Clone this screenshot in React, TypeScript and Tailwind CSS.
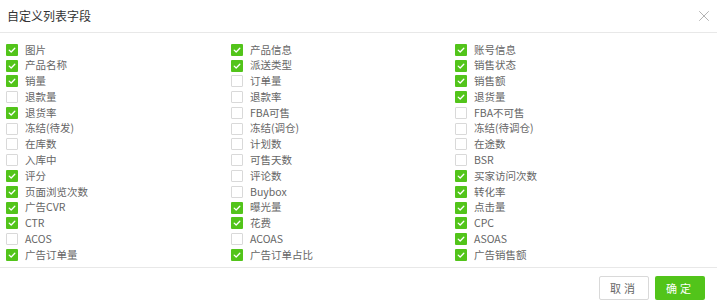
import { X } from "lucide-react";

const FIELDS: [string, boolean][] = [
  ["图片", true], ["产品信息", true], ["账号信息", true],
  ["产品名称", true], ["派送类型", true], ["销售状态", true],
  ["销量", true], ["订单量", false], ["销售额", true],
  ["退款量", false], ["退款率", false], ["退货量", true],
  ["退货率", true], ["FBA可售", false], ["FBA不可售", false],
  ["冻结(待发)", false], ["冻结(调仓)", false], ["冻结(待调仓)", false],
  ["在库数", false], ["计划数", false], ["在途数", false],
  ["入库中", false], ["可售天数", false], ["BSR", false],
  ["评分", true], ["评论数", false], ["买家访问次数", true],
  ["页面浏览次数", true], ["Buybox", false], ["转化率", true],
  ["广告CVR", true], ["曝光量", true], ["点击量", true],
  ["CTR", true], ["花费", true], ["CPC", true],
  ["ACOS", false], ["ACOAS", false], ["ASOAS", true],
  ["广告订单量", true], ["广告订单占比", true], ["广告销售额", true],
];

function Check({ checked }: { checked: boolean }) {
  if (!checked) {
    return <span className="block size-[12px] shrink-0 rounded-[1px] border border-[#d9d9d9] bg-white" />;
  }
  return (
    <span className="flex size-[12px] shrink-0 items-center justify-center rounded-[1px] bg-[#52c41a]">
      <svg viewBox="0 0 12 12" className="size-[12px]" fill="none">
        <path d="M3.2 6.1 5.2 8 8.8 4.3" stroke="white" strokeWidth="1.3" strokeLinecap="round" strokeLinejoin="round" />
      </svg>
    </span>
  );
}

export default function App() {
  return (
    <div className="flex h-[308px] w-[717px] flex-col bg-white font-['Noto_Sans_CJK_SC','Noto_Sans',sans-serif]">
      <header className="flex h-[33px] items-center justify-between border-b border-[#e8e8e8] pl-[7px] pr-[4px]">
        <h1 className="text-[12px] text-[#333]">自定义列表字段</h1>
        <X className="size-[18px] text-[#999]" strokeWidth={1} />
      </header>

      <div className="grid flex-1 grid-cols-[225px_224px_1fr] content-start auto-rows-[15.77px] pl-[6px] pt-[9px]">
        {FIELDS.map(([label, checked]) => (
          <label key={label} className="flex items-center gap-[7px]">
            <Check checked={checked} />
            <span className="text-[10.5px] leading-none text-[#666]">{label}</span>
          </label>
        ))}
      </div>

      <footer className="flex h-[41px] items-center justify-end gap-[6px] border-t border-[#e8e8e8] pr-[12px]">
        <button className="h-[24px] w-[50px] rounded-[2px] border border-[#d9d9d9] bg-white text-[11px] tracking-[3px] text-[#666]">
          取消
        </button>
        <button className="h-[24px] w-[50px] rounded-[2px] bg-[#52c41a] text-[11px] tracking-[3px] text-white">
          确定
        </button>
      </footer>
    </div>
  );
}
